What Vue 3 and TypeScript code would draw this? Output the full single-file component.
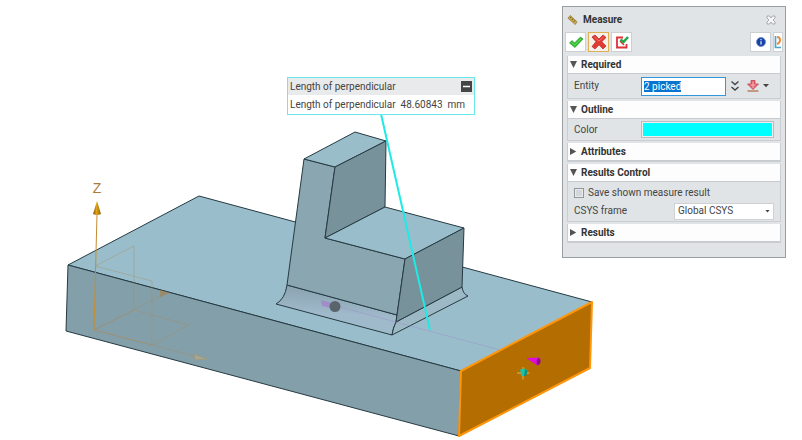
<script setup lang="ts">
import { nextTick, onMounted, reactive, ref } from 'vue'

type SectionKey = 'required' | 'outline' | 'attributes' | 'control' | 'results'

const open = reactive<Record<SectionKey, boolean>>({
  required: true,
  outline: true,
  attributes: false,
  control: true,
  results: false,
})

const entity = ref('2 picked')
const frame = ref('Global CSYS')
const saveResult = ref(false)
const outlineColor = ref('#00ffff')
const collapsed = ref(false)
const entityInput = ref<HTMLInputElement | null>(null)

const measurement = { label: 'Length of perpendicular', value: '48.60843', unit: 'mm' }

function toggle(key: SectionKey): void {
  open[key] = !open[key]
}

onMounted(async () => {
  await nextTick()
  entityInput.value?.focus()
  entityInput.value?.select()
})
</script>

<template>
  <main class="viewport">
    <svg class="scene" viewBox="0 0 802 440" preserveAspectRatio="xMinYMin meet" role="img" aria-label="Solid model">
      <defs>
        <linearGradient id="fillet" x1="0" y1="0" x2="-0.15" y2="1">
          <stop offset="0" stop-color="#89a3b0" />
          <stop offset="0.5" stop-color="#a0b9cb" />
          <stop offset="1" stop-color="#9bbccb" />
        </linearGradient>
        <linearGradient id="gold" x1="0" x2="1">
          <stop offset="0" stop-color="#7a5208" />
          <stop offset="0.45" stop-color="#e0a416" />
          <stop offset="1" stop-color="#8b5d08" />
        </linearGradient>
      </defs>

      <!-- slab -->
      <g stroke="#263a42" stroke-width="1" stroke-linejoin="round">
        <path d="M68 265 199 196 592 302 461 371Z" fill="#9abdcb" />
        <path d="M68 265 461 371 459 436 66 331Z" fill="#839faa" />
      </g>
      <path d="M461 371 592 302 590 368 459 436Z" fill="#b36d00" stroke="#ff9508" stroke-width="2" stroke-linejoin="round" />

      <!-- boss -->
      <g stroke="#263a42" stroke-width="1" stroke-linejoin="round">
        <path d="M287 285Q285 299 276 304L392 335Q393 328 396 322L397 315Z" fill="url(#fillet)" />
        <path d="M396 322 462 287Q463 294 468 296L392 335Q393 328 396 322Z" fill="#9db9c6" />
        <path d="M304 159 335 167 325 238 405 259 397 315 287 285Z" fill="#89a6b1" />
        <path d="M304 159 355 132 386 141 335 167Z" fill="#9abdca" />
        <path d="M335 167 386 141 385 207 325 238Z" fill="#78929c" />
        <path d="M325 238 385 207 464 228 405 259Z" fill="#9abdcb" />
        <path d="M405 259 464 228 462 287 396 322Z" fill="#78929c" />
      </g>

      <!-- measured direction -->
      <path d="M325 303 500 350" fill="none" stroke="#9b8fc4" stroke-width="1" opacity="0.45" />
      <path d="M321 300 332 303 331 308 322 306Z" fill="#a682c9" opacity="0.75" />
      <circle cx="335" cy="306.500" r="5.500" fill="#59656b" />
      <path d="M527 358 540 357.500Q541 362 538 365.500Q536 365 527 358.500Z" fill="#e10bdc" />
      <path d="M538 358Q541 359 540.500 362T537 365Q536 360 538 358Z" fill="#880a88" />
      <path d="M517 373H529.500M523 367V379.500" stroke="#e9b34a" stroke-width="1" />
      <path d="M520 369.500 525 368.500 527.500 370.500 526 375.500 521.500 376.500Z" fill="#19c5aa" />
      <path d="M525 369 527.500 371 526 376 524 376Z" fill="#0e8f83" />

      <!-- coordinate system -->
      <g fill="none" stroke="#a58b60" stroke-width="1">
        <g opacity="0.4">
          <path d="M95 266 134 246V310M95 266 152 281V345M152 345 189 325 134 310M152 345 198 357M134 310 162 295" />
        </g>
        <path d="M94 330 134 310M94 330 152 345" opacity="0.75" />
        <path d="M94 330 97 214" stroke="#c58c32" />
        <path d="M160 290 170 293 160 297Z" fill="#a38452" stroke="none" opacity="0.7" />
        <path d="M194 354 207 359 195 360Z" fill="#b9ad82" stroke="#a99a70" opacity="0.65" />
      </g>
      <path d="M97 201 101 214Q97 216 93 214Z" fill="url(#gold)" />
      <text class="axis" x="97" y="193" text-anchor="middle">Z</text>

      <path d="M381 114 430 330" fill="none" stroke="#1eeae6" stroke-width="2" />
    </svg>

    <section class="callout" aria-label="Measurement">
      <header class="callout-head">
        <span>{{ measurement.label }}</span>
        <button class="minimize" type="button" aria-label="Collapse measurement" @click="collapsed = !collapsed">
          <svg viewBox="0 0 11 11"><path d="M2 5.500H9" stroke="#fff" stroke-width="1.500" /></svg>
        </button>
      </header>
      <div v-if="!collapsed" class="callout-row">
        <span>{{ measurement.label }}</span>
        <span>{{ measurement.value }}</span>
        <span>{{ measurement.unit }}</span>
      </div>
    </section>

    <form class="panel" aria-label="Measure" @submit.prevent>
      <header class="title">
        <svg class="ruler" viewBox="0 0 12 12">
          <path d="M1 4 3.500 1 11 8 9 11Z" fill="#c9a548" stroke="#8f7434" stroke-width="0.700" />
          <path d="M4.500 2.500 3.500 4M6.500 4.500 5.500 6M8.500 6.500 7.500 8" stroke="#604b22" stroke-width="0.900" />
        </svg>
        <h1>Measure</h1>
        <button class="close" type="button" aria-label="Close">
          <svg viewBox="0 0 10 10">
            <path d="M1 1H3.500L5 3 6.500 1H9V3L7 5 9 7V9H6.500L5 7 3.500 9H1V7L3 5 1 3Z" fill="#f5f6f7" stroke="#8c9195" stroke-width="0.700" />
          </svg>
        </button>
      </header>

      <div class="toolbar">
        <button class="tool" type="button" aria-label="OK">
          <svg viewBox="0 0 16 16"><path d="M1.500 9 4 6.500 6.500 9 12.500 3 15 5 7 13.500Z" fill="#35bd31" stroke="#239b2a" stroke-width="0.700" stroke-linejoin="round" /><path d="M3.500 8.500 6.700 11 13 5" fill="none" stroke="#6fdf62" stroke-width="1" /></svg>
        </button>
        <button class="tool current" type="button" aria-label="Cancel">
          <svg viewBox="0 0 16 16"><path d="M1 3 4 1 8 5 12 1 15 3.500 10.800 7.700 15 12 12 15 8 10.800 4 15 1 12.500 5 7.700Z" fill="#e23a32" stroke="#b32420" stroke-width="0.700" stroke-linejoin="round" /><path d="M3.500 3 8 7 12.500 3" fill="none" stroke="#f4746a" stroke-width="1" /></svg>
        </button>
        <button class="tool" type="button" aria-label="Apply">
          <svg viewBox="0 0 16 16"><path d="M9 3.500H3V13.500H12.500V10" fill="none" stroke="#dc3238" stroke-width="1.800" /><path d="M6 7 10 11" fill="none" stroke="#dc3238" stroke-width="1.500" /><path d="M6.500 5.500 9.500 8 14 3" fill="none" stroke="#27a743" stroke-width="2.600" /></svg>
        </button>
        <button class="tool info" type="button" aria-label="Information">
          <svg viewBox="0 0 16 16"><circle cx="8" cy="8" r="4.500" fill="#1742a5" stroke="#6687c7" stroke-width="0.800" /><path d="M8 7.200V10.500M8 5V6.200" stroke="#dce6fa" stroke-width="1.300" /></svg>
        </button>
        <button class="tool clipped" type="button" aria-label="Show shortcuts">
          <svg viewBox="0 0 8 16"><path d="M1.500 2V13.500H7" fill="none" stroke="#4aa5cf" stroke-width="1.700" /><path d="M3 3Q6 3 6 6T3 10" fill="none" stroke="#ed8a3a" stroke-width="2" /></svg>
        </button>
      </div>

      <section class="group">
        <h2><button type="button" :aria-expanded="open.required" @click="toggle('required')"><i class="arrow" :class="{ down: open.required }"></i>Required</button></h2>
        <div v-if="open.required" class="body">
          <div class="row entity-row">
            <label for="entity">Entity</label>
            <input id="entity" ref="entityInput" v-model="entity" type="text" spellcheck="false">
            <button class="plain more" type="button" aria-label="Expand selection">
              <svg viewBox="0 0 10 12"><path d="M1.500 1.500 5 4.500 8.500 1.500M1.500 7 5 10 8.500 7" fill="none" stroke="#444" stroke-width="1.400" /></svg>
            </button>
            <button class="plain pick" type="button" aria-label="Selection method">
              <svg viewBox="0 0 22 12">
                <path d="M4 0.500H8V4H11.500L6 9.500 0.500 4H4Z" fill="#df6670" stroke="#c9434e" stroke-width="0.800" />
                <path d="M3.500 5H8.500M6 1.500V8" stroke="#f7b9bc" stroke-width="0.900" />
                <path d="M0.500 11H11.500" stroke="#b0704a" stroke-width="1.300" />
                <path d="M16 4H22L19 7.200Z" fill="#444" />
              </svg>
            </button>
          </div>
        </div>
      </section>

      <section class="group">
        <h2><button type="button" :aria-expanded="open.outline" @click="toggle('outline')"><i class="arrow" :class="{ down: open.outline }"></i>Outline</button></h2>
        <div v-if="open.outline" class="body">
          <div class="row color-row">
            <label for="color">Color</label>
            <input id="color" v-model="outlineColor" type="color">
          </div>
        </div>
      </section>

      <section class="group">
        <h2><button type="button" :aria-expanded="open.attributes" @click="toggle('attributes')"><i class="arrow" :class="{ down: open.attributes }"></i>Attributes</button></h2>
      </section>

      <section class="group">
        <h2><button type="button" :aria-expanded="open.control" @click="toggle('control')"><i class="arrow" :class="{ down: open.control }"></i>Results Control</button></h2>
        <div v-if="open.control" class="body control-body">
          <div class="row check-row">
            <input id="save" v-model="saveResult" type="checkbox">
            <label for="save">Save shown measure result</label>
          </div>
          <div class="row frame-row">
            <label for="frame">CSYS frame</label>
            <span class="select-wrap">
              <select id="frame" v-model="frame">
                <option>Global CSYS</option>
              </select>
              <i class="caret"></i>
            </span>
          </div>
        </div>
      </section>

      <section class="group">
        <h2><button type="button" :aria-expanded="open.results" @click="toggle('results')"><i class="arrow" :class="{ down: open.results }"></i>Results</button></h2>
      </section>
    </form>
  </main>
</template>

<style>
body {
  background: #fff;
}
</style>

<style scoped>
.viewport {
  position: relative;
  min-height: 100vh;
  overflow: hidden;
  color: #444;
  font-family: Roboto, "Open Sans", sans-serif;
  font-size: 10px;
  line-height: 14px;
}

* {
  box-sizing: border-box;
}

button,
input,
select {
  margin: 0;
  padding: 0;
  border: 0;
  border-radius: 0;
  background: none;
  color: inherit;
  font: inherit;
}

svg {
  display: block;
}

.scene {
  width: 100%;
}

.axis {
  fill: #ad7a35;
  font-family: "Liberation Sans", Arial, sans-serif;
  font-size: 14px;
}

.callout {
  position: absolute;
  top: 77px;
  left: 287px;
  border: 1px solid #6ae8ea;
  background: #fff;
}

.callout-head {
  display: flex;
  align-items: center;
  justify-content: space-between;
  height: 17px;
  padding: 0 2px;
  background: #e9eaec;
}

.minimize {
  width: 11px;
  height: 11px;
  background: #454545;
}

.callout-row {
  display: flex;
  align-items: center;
  gap: 5px;
  height: 19px;
  padding: 0 9px 0 2px;
}

.panel {
  position: absolute;
  top: 6px;
  right: 16px;
  width: 224px;
  padding: 0 4px 14px;
  border: 1px solid #9b9ea1;
  background: #e0e4e7;
}

.title {
  display: flex;
  align-items: center;
  gap: 5px;
  height: 25px;
}

.ruler {
  width: 11px;
  height: 12px;
}

h1,
h2 {
  margin: 0;
  color: #333;
  font-size: 10px;
  font-weight: 700;
}

h1 {
  flex: 1;
}

.close {
  width: 10px;
  height: 10px;
  margin-right: 5px;
}

.toolbar {
  display: flex;
  gap: 2px;
  height: 24px;
  margin: 0 -2px;
}

.tool {
  display: grid;
  place-items: center;
  width: 21px;
  height: 20px;
  border: 1px solid #cdd0d3;
  background: #fff;
}

.tool svg {
  width: 16px;
  height: 16px;
}

.current {
  border-color: #dfae55;
  background: #f5f1ea;
}

.info {
  margin-left: auto;
}

.clipped {
  width: 10px;
}

.tool.clipped svg {
  width: 8px;
}

.group + .group {
  margin-top: 2px;
}

.group {
  border: 1px solid #cbced1;
  border-width: 0 1px 1px;
}

h2 {
  height: 18px;
  background: #fdfdfd;
  border-bottom: 1px solid #c7cbcf;
}

h2 button {
  display: flex;
  align-items: center;
  gap: 4px;
  width: 100%;
  height: 17px;
  padding-left: 2px;
}

.arrow {
  width: 7px;
  height: 7px;
  background: #555;
  clip-path: polygon(0 0, 90% 50%, 0 100%);
}

.arrow.down {
  clip-path: polygon(0 0, 100% 0, 50% 100%);
}

.body {
  padding-left: 6px;
}

.row {
  display: flex;
  align-items: center;
}

.entity-row {
  height: 24px;
}

.entity-row label,
.color-row label {
  width: 67px;
}

#entity {
  width: 85px;
  height: 19px;
  padding-left: 2px;
  border: 1px solid #3297db;
  background: #fff;
  outline: none;
}

#entity::selection {
  background: #0874cf;
  color: #fff;
}

.more {
  width: 10px;
  height: 12px;
  margin-left: 4px;
}

.pick {
  width: 22px;
  height: 12px;
  margin-left: 7px;
}

.color-row {
  height: 21px;
  padding-right: 6px;
}

#color {
  flex: 1;
  min-width: 0;
  height: 17px;
  padding: 1px;
  border: 1px solid #b9bdc1;
  background: #eee;
}

#color::-webkit-color-swatch-wrapper {
  padding: 0;
}

#color::-webkit-color-swatch {
  border: 0;
}

.control-body {
  padding-top: 2px;
}

.check-row {
  gap: 4px;
  height: 17px;
}

#save {
  width: 10px;
  height: 10px;
  appearance: none;
  border: 1px solid #92979b;
  background: #d3d7da;
  box-shadow: inset 0 0 0 1px #e9ebed;
}

#save:checked {
  background: #555;
}

.frame-row {
  height: 20px;
  padding-right: 6px;
}

.frame-row label {
  width: 100px;
}

.select-wrap {
  display: grid;
  flex: 1;
  align-items: center;
}

.select-wrap > * {
  grid-area: 1 / 1;
}

#frame {
  width: 100%;
  height: 17px;
  padding-left: 3px;
  appearance: none;
  border: 1px solid #ced2d5;
  background: #fff;
}

.caret {
  justify-self: end;
  width: 5px;
  height: 3px;
  margin-right: 4px;
  background: #444;
  clip-path: polygon(0 0, 100% 0, 50% 100%);
  pointer-events: none;
}
</style>
